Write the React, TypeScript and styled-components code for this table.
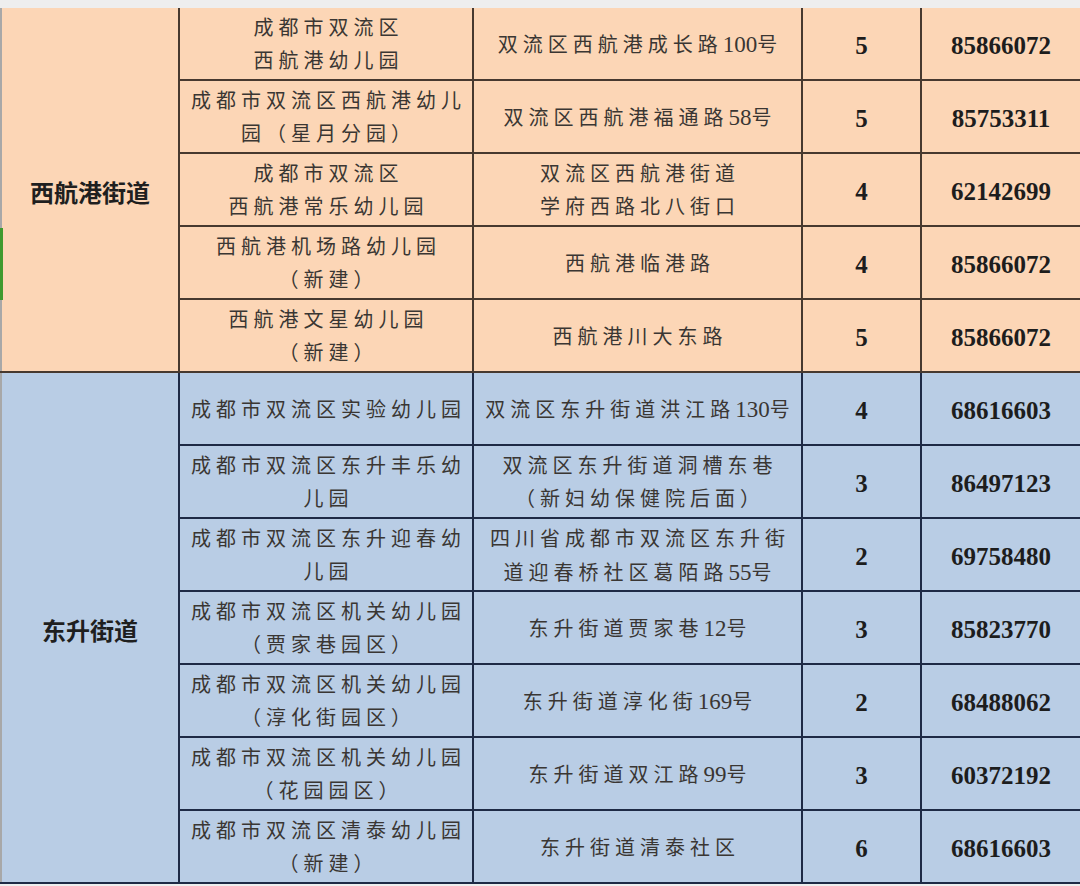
import React from "react";
import styled, { createGlobalStyle } from "styled-components";

type Tone = "peach" | "blue";

type Row = {
  name: string[];
  addr: string[];
  classes: number;
  phone: string;
};

type Street = {
  street: string;
  tone: Tone;
  rows: Row[];
};

const tones: Record<Tone, { bg: string; line: string }> = {
  peach: { bg: "#fcd6b6", line: "#47392f" },
  blue: { bg: "#b9cde5", line: "#1e2a45" },
};

const data: Street[] = [
  {
    street: "西航港街道",
    tone: "peach",
    rows: [
      { name: ["成都市双流区", "西航港幼儿园"], addr: ["双流区西航港成长路100号"], classes: 5, phone: "85866072" },
      { name: ["成都市双流区西航港幼儿", "园（星月分园）"], addr: ["双流区西航港福通路58号"], classes: 5, phone: "85753311" },
      { name: ["成都市双流区", "西航港常乐幼儿园"], addr: ["双流区西航港街道", "学府西路北八街口"], classes: 4, phone: "62142699" },
      { name: ["西航港机场路幼儿园", "（新建）"], addr: ["西航港临港路"], classes: 4, phone: "85866072" },
      { name: ["西航港文星幼儿园", "（新建）"], addr: ["西航港川大东路"], classes: 5, phone: "85866072" },
    ],
  },
  {
    street: "东升街道",
    tone: "blue",
    rows: [
      { name: ["成都市双流区实验幼儿园"], addr: ["双流区东升街道洪江路130号"], classes: 4, phone: "68616603" },
      { name: ["成都市双流区东升丰乐幼", "儿园"], addr: ["双流区东升街道洞槽东巷", "（新妇幼保健院后面）"], classes: 3, phone: "86497123" },
      { name: ["成都市双流区东升迎春幼", "儿园"], addr: ["四川省成都市双流区东升街", "道迎春桥社区葛陌路55号"], classes: 2, phone: "69758480" },
      { name: ["成都市双流区机关幼儿园", "（贾家巷园区）"], addr: ["东升街道贾家巷12号"], classes: 3, phone: "85823770" },
      { name: ["成都市双流区机关幼儿园", "（淳化街园区）"], addr: ["东升街道淳化街169号"], classes: 2, phone: "68488062" },
      { name: ["成都市双流区机关幼儿园", "（花园园区）"], addr: ["东升街道双江路99号"], classes: 3, phone: "60372192" },
      { name: ["成都市双流区清泰幼儿园", "（新建）"], addr: ["东升街道清泰社区"], classes: 6, phone: "68616603" },
    ],
  },
];

const GlobalStyle = createGlobalStyle`
  html, body {
    margin: 0;
    padding: 0;
    background: #eeeeee;
  }
`;

const Page = styled.div`
  position: relative;
  width: 1080px;
  height: 886px;
  padding-top: 8px;
  box-sizing: border-box;
  background: #eeeeee;
  overflow: hidden;
`;

const Sheet = styled.div`
  display: flex;
  flex-direction: column;
`;

const Section = styled.section<{ $tone: Tone }>`
  display: flex;
  background: ${(p) => tones[p.$tone].bg};
  border-bottom: 2px solid ${(p) => tones[p.$tone].line};
`;

const StreetCell = styled.div`
  width: 178px;
  flex-shrink: 0;
  display: flex;
  align-items: center;
  justify-content: center;
  box-sizing: border-box;
  border-left: 2px solid #a8a8a8;
  padding-top: 4px;
  font-family: "Noto Sans CJK SC", "Liberation Sans", sans-serif;
  font-weight: 700;
  font-size: 24px;
  color: #1f1f1f;
`;

const Rows = styled.div`
  flex: 1;
  display: flex;
  flex-direction: column;
`;

const RowLine = styled.div<{ $tone: Tone }>`
  display: grid;
  grid-template-columns: 294px 329px 119px 1fr;
  height: 73px;
  box-sizing: border-box;
  border-bottom: 2px solid ${(p) => tones[p.$tone].line};

  &:last-child {
    border-bottom: none;
    height: 71px;
  }
`;

const Cell = styled.div<{ $tone: Tone; $bold?: boolean }>`
  display: flex;
  flex-direction: column;
  align-items: center;
  justify-content: center;
  box-sizing: border-box;
  border-left: 2px solid ${(p) => tones[p.$tone].line};
  padding-top: 3px;
  text-align: center;
  white-space: nowrap;
  font-family: "Liberation Serif", "Noto Sans CJK SC", serif;
  color: ${(p) => (p.$bold ? "#1d1d1d" : "#3a3633")};
  font-size: ${(p) => (p.$bold ? "25px" : "20px")};
  font-weight: ${(p) => (p.$bold ? 700 : 400)};
  letter-spacing: ${(p) => (p.$bold ? "0" : "5px")};
  line-height: 33px;
`;

const Line = styled.span`
  display: block;
  margin-right: -5px;
`;

const Digits = styled.span`
  font-size: 23px;
  letter-spacing: 0;
`;

const GreenMark = styled.div`
  position: absolute;
  left: 0;
  top: 228px;
  width: 3px;
  height: 72px;
  background: #3f9a2e;
`;

function Text({ value }: { value: string }) {
  const parts = value.split(/(\d+)/).filter(Boolean);
  return (
    <Line>
      {parts.map((p, i) => (/^\d+$/.test(p) ? <Digits key={i}>{p}</Digits> : <React.Fragment key={i}>{p}</React.Fragment>))}
    </Line>
  );
}

export default function App() {
  return (
    <>
      <GlobalStyle />
      <Page>
        <Sheet>
          {data.map((s) => (
            <Section key={s.street} $tone={s.tone}>
              <StreetCell>{s.street}</StreetCell>
              <Rows>
                {s.rows.map((r, i) => (
                  <RowLine key={i} $tone={s.tone}>
                    <Cell $tone={s.tone}>
                      {r.name.map((t) => (
                        <Text key={t} value={t} />
                      ))}
                    </Cell>
                    <Cell $tone={s.tone}>
                      {r.addr.map((t) => (
                        <Text key={t} value={t} />
                      ))}
                    </Cell>
                    <Cell $tone={s.tone} $bold>
                      {r.classes}
                    </Cell>
                    <Cell $tone={s.tone} $bold>
                      {r.phone}
                    </Cell>
                  </RowLine>
                ))}
              </Rows>
            </Section>
          ))}
        </Sheet>
        <GreenMark />
      </Page>
    </>
  );
}
